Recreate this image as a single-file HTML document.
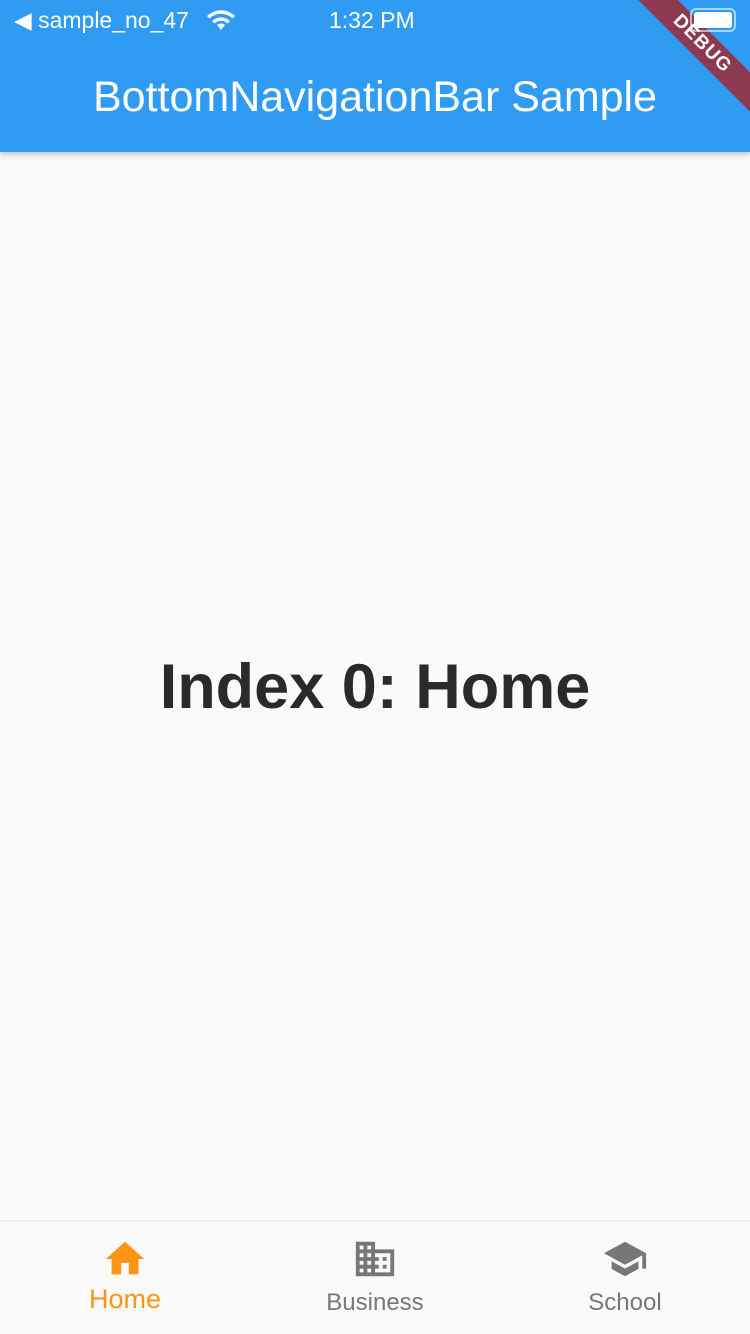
<!DOCTYPE html>
<html><head><meta charset="utf-8"><style>
*{margin:0;padding:0;box-sizing:border-box}
body{width:750px;height:1334px;overflow:hidden;background:#fafafa;font-family:"Liberation Sans",sans-serif;position:relative}
.bar{position:absolute;left:0;top:0;width:750px;height:152px;background:#2f9bf3;box-shadow:0 2px 6px rgba(0,0,0,.25);color:#fff;overflow:hidden}
.st{position:absolute;top:6px;font-size:23px;line-height:28px}
.title{position:absolute;top:72px;left:0;width:750px;text-align:center;font-size:43px;line-height:50px}
.main{position:absolute;top:651px;left:0;width:750px;text-align:center;font-size:63px;font-weight:bold;color:#2a2a2a;line-height:72px}
.nav{position:absolute;left:0;top:1220px;width:750px;height:114px;background:#fafafa;border-top:2px solid #efefef}
.it{position:absolute;top:14px;width:250px;text-align:center}
.it svg{display:block;margin:0 auto}
.lbl{font-size:24px;color:#777}
.banner{position:absolute;right:-52px;top:30px;width:200px;height:28px;background:#8b3a4f;transform:rotate(45deg);color:#fff;font-weight:bold;font-size:19px;text-align:center;line-height:28px;letter-spacing:1px}
</style></head><body>
<div class="bar">
<div class="st" style="left:14px">◀ sample_no_47</div>
<svg style="position:absolute;left:206px;top:9px" width="30" height="22" viewBox="0 0 30 22"><path d="M15 21 L11 16 A6 6 0 0 1 19 16 Z M6 12 A13 13 0 0 1 24 12 L21.5 14.5 A9.5 9.5 0 0 0 8.5 14.5 Z M1 7 A20 20 0 0 1 29 7 L26.5 9.5 A16.5 16.5 0 0 0 3.5 9.5 Z" fill="#fff"/></svg>
<div class="st" style="left:329px">1:32 PM</div>
<div class="banner">DEBUG</div>
<div style="position:absolute;left:690px;top:8px;width:46px;height:24px;border:2px solid rgba(255,255,255,.6);border-radius:6px;padding:2px"><div style="background:#fff;width:100%;height:100%;border-radius:3px"></div></div>
<div class="title">BottomNavigationBar Sample</div>
</div>
<div class="main">Index 0: Home</div>
<div class="nav">
<div class="it" style="left:0"><svg width="46" height="46" viewBox="0 0 24 24"><path d="M10 20v-6h4v6h5v-8h3L12 3 2 12h3v8z" fill="#ff9414"/></svg><div class="lbl" style="color:#ff9414;font-size:27px;margin-top:2px">Home</div></div>
<div class="it" style="left:250px"><svg width="46" height="46" viewBox="0 0 24 24"><path d="M12 7V3H2v18h20V7H12zM6 19H4v-2h2v2zm0-4H4v-2h2v2zm0-4H4V9h2v2zm0-4H4V5h2v2zm4 12H8v-2h2v2zm0-4H8v-2h2v2zm0-4H8V9h2v2zm0-4H8V5h2v2zm10 12h-8v-2h2v-2h-2v-2h2v-2h-2V9h8v10zm-2-8h-2v2h2v-2zm0 4h-2v2h2v-2z" fill="#777"/></svg><div class="lbl" style="margin-top:7px">Business</div></div>
<div class="it" style="left:500px"><svg width="46" height="46" viewBox="0 0 24 24"><path d="M5 13.18v4L12 21l7-3.82v-4L12 17l-7-3.82zM12 3L1 9l11 6 9-4.91V17h2V9L12 3z" fill="#777"/></svg><div class="lbl" style="margin-top:7px">School</div></div>
</div>
</body></html>
